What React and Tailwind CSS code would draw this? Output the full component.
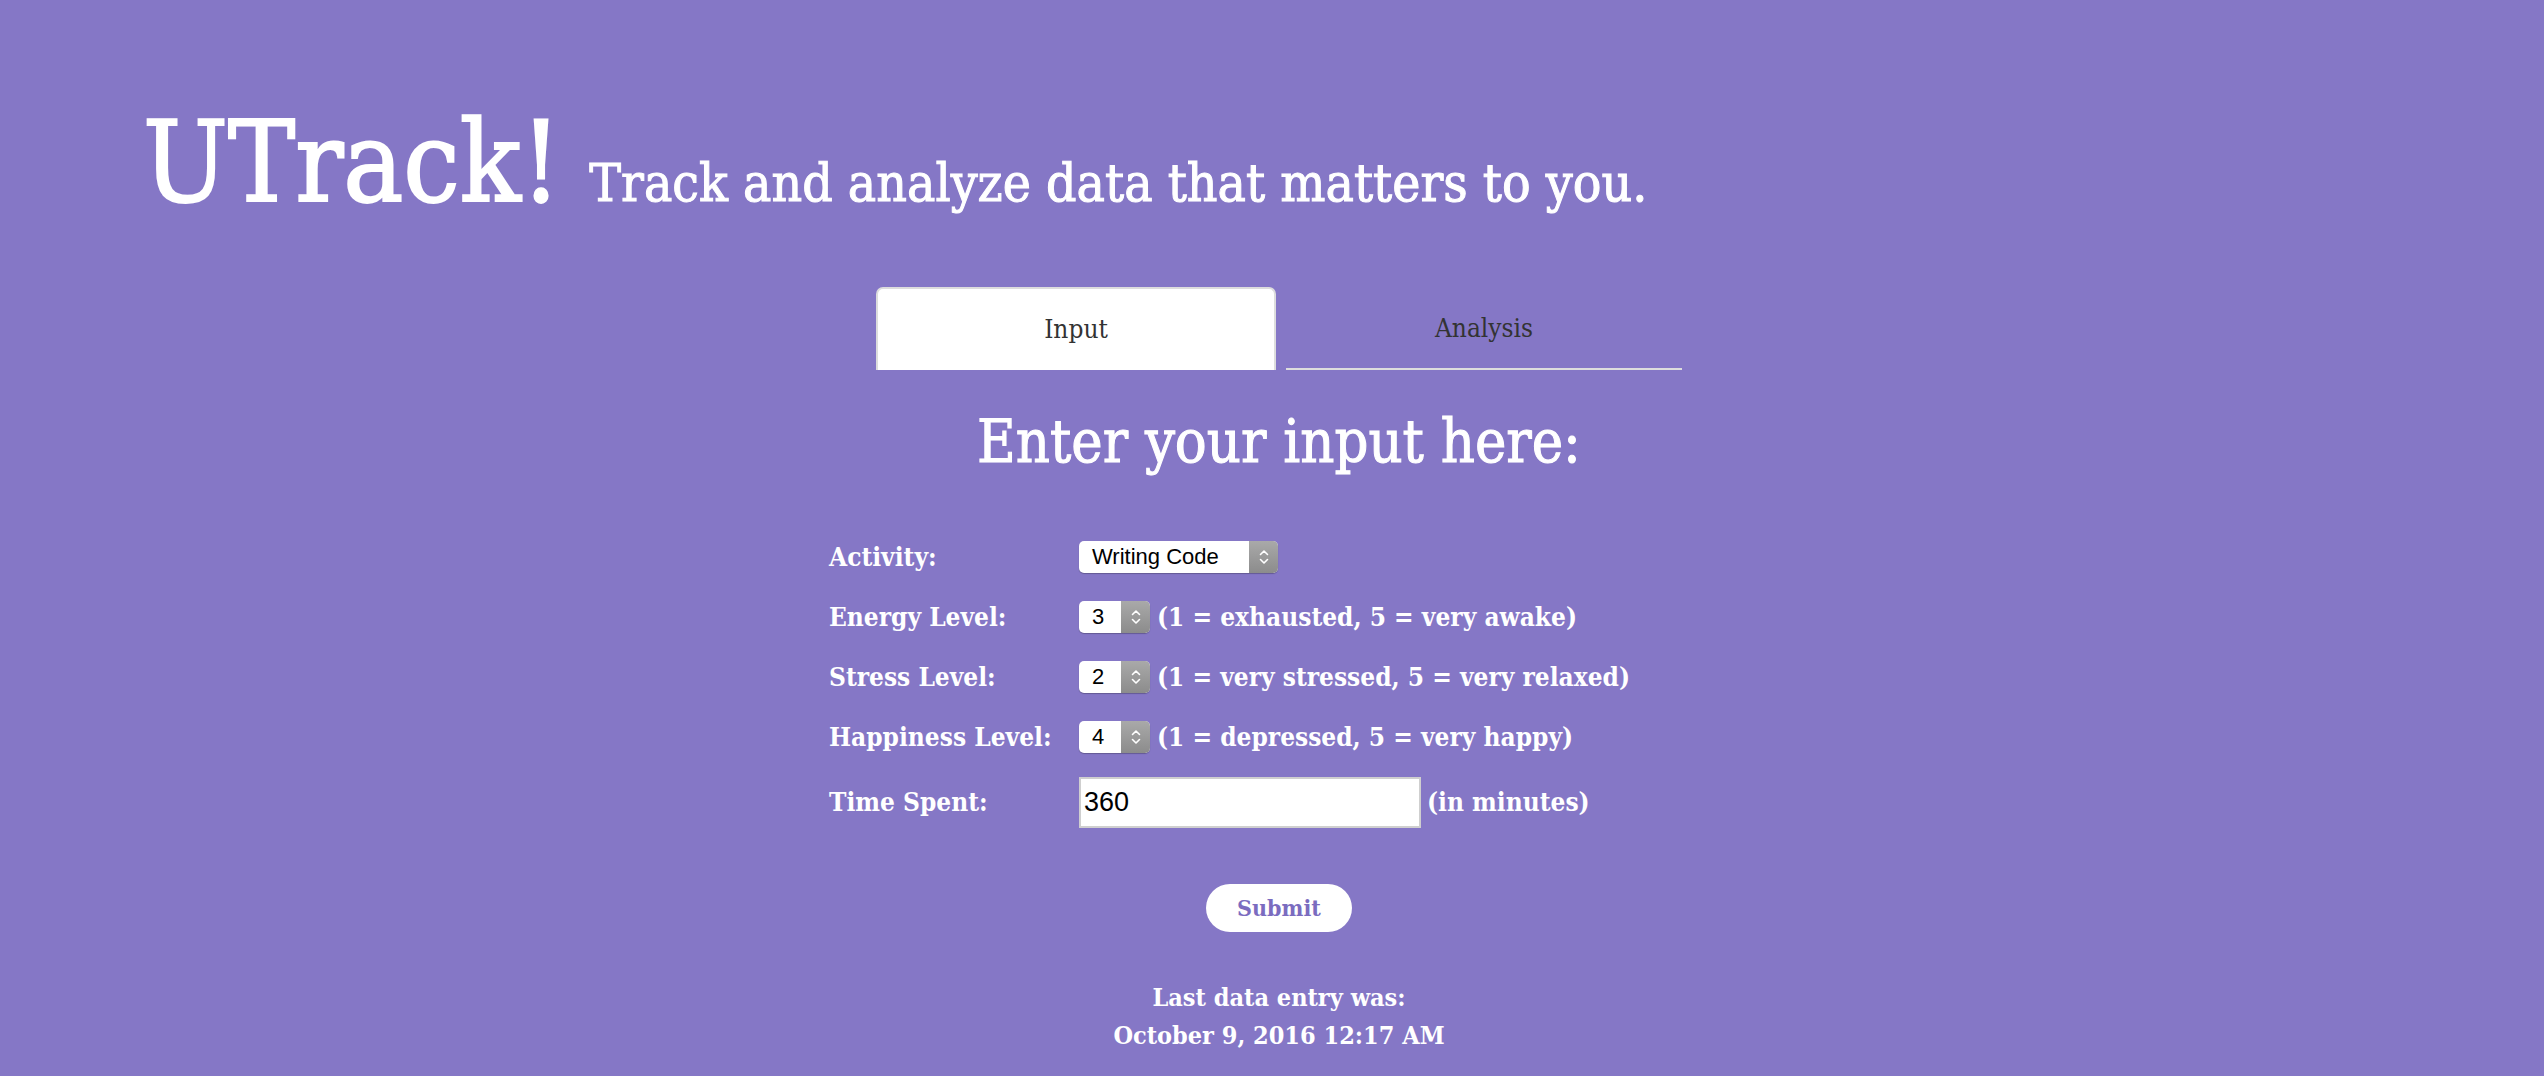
import React from "react";

const serif = { fontFamily: '"DejaVu Serif", serif', fontStretch: "condensed" };
const sans = { fontFamily: '"Liberation Sans", Arial, sans-serif' };

function Chevrons() {
  return (
    <svg width="12" height="18" viewBox="0 0 12 18" fill="none" stroke="white" strokeWidth="1.6" strokeLinecap="round" strokeLinejoin="round">
      <path d="M2.5 6.5 L6 3 L9.5 6.5" />
      <path d="M2.5 11.5 L6 15 L9.5 11.5" />
    </svg>
  );
}

// macOS-style select box
function FakeSelect({ value, width }) {
  return (
    <div className={`flex h-[32px] ${width} overflow-hidden rounded-[5px] bg-white shadow-[0_1px_1px_rgba(0,0,0,0.25)]`}>
      <span className="flex flex-1 items-center pl-[13px] text-[22px] font-normal leading-none text-black" style={sans}>
        {value}
      </span>
      <span className="flex w-[29px] items-center justify-center bg-gradient-to-b from-[#a9a9a9] to-[#8c8c8c]">
        <Chevrons />
      </span>
    </div>
  );
}

export default function App() {
  return (
    <div className="min-h-screen bg-[#8577c6] pl-[14px] text-white" style={serif}>
      {/* Header */}
      <header className="flex items-baseline pl-[129px] pt-[106px]">
        <h1 className="text-[112px] leading-none [-webkit-text-stroke:2px_white]">UTrack!</h1>
        <p className="ml-[28px] text-[53px] leading-none [-webkit-text-stroke:1px_white]">
          Track and analyze data that matters to you.
        </p>
      </header>

      {/* Tabs */}
      <div className="mx-auto mt-[69px] flex w-[806px] items-end gap-[10px] text-[26px] text-[#333]">
        <div className="flex h-[83px] flex-1 items-center justify-center rounded-t-[7px] border-2 border-b-0 border-[#dddddd] bg-white">
          Input
        </div>
        <div className="flex h-[81px] flex-1 items-center justify-center border-b-2 border-[#dddddd]">
          Analysis
        </div>
      </div>

      {/* Heading */}
      <h2 className="mt-[42px] text-center text-[59px] leading-none [-webkit-text-stroke:1px_white]">Enter your input here:</h2>

      {/* Form */}
      <div className="mx-auto mt-[56px] w-[900px] text-[26px] font-bold">
        <div className="flex h-[60px] items-center">
          <span className="w-[250px]">Activity:</span>
          <FakeSelect value="Writing Code" width="w-[199px]" />
        </div>
        <div className="flex h-[60px] items-center">
          <span className="w-[250px]">Energy Level:</span>
          <FakeSelect value="3" width="w-[71px]" />
          <span className="ml-[7px]">(1 = exhausted, 5 = very awake)</span>
        </div>
        <div className="flex h-[60px] items-center">
          <span className="w-[250px]">Stress Level:</span>
          <FakeSelect value="2" width="w-[71px]" />
          <span className="ml-[7px]">(1 = very stressed, 5 = very relaxed)</span>
        </div>
        <div className="flex h-[60px] items-center">
          <span className="w-[250px]">Happiness Level:</span>
          <FakeSelect value="4" width="w-[71px]" />
          <span className="ml-[7px]">(1 = depressed, 5 = very happy)</span>
        </div>
        <div className="flex h-[70px] items-center">
          <span className="w-[250px]">Time Spent:</span>
          <input
            type="text"
            defaultValue="360"
            className="h-[51px] w-[342px] border-2 border-[#cfcfcf] bg-white px-[3px] text-[27px] font-normal text-black outline-none"
            style={sans}
          />
          <span className="ml-[6px]">(in minutes)</span>
        </div>
      </div>

      {/* Submit */}
      <div className="mt-[47px] flex justify-center">
        <button className="h-[48px] w-[146px] rounded-full bg-white text-[23px] font-bold text-[#7b6cc0]" style={serif}>
          Submit
        </button>
      </div>

      {/* Last entry */}
      <div className="mt-[47px] text-center text-[25px] font-bold leading-[38px]">
        <p>Last data entry was:</p>
        <p>October 9, 2016 12:17 AM</p>
      </div>
    </div>
  );
}
